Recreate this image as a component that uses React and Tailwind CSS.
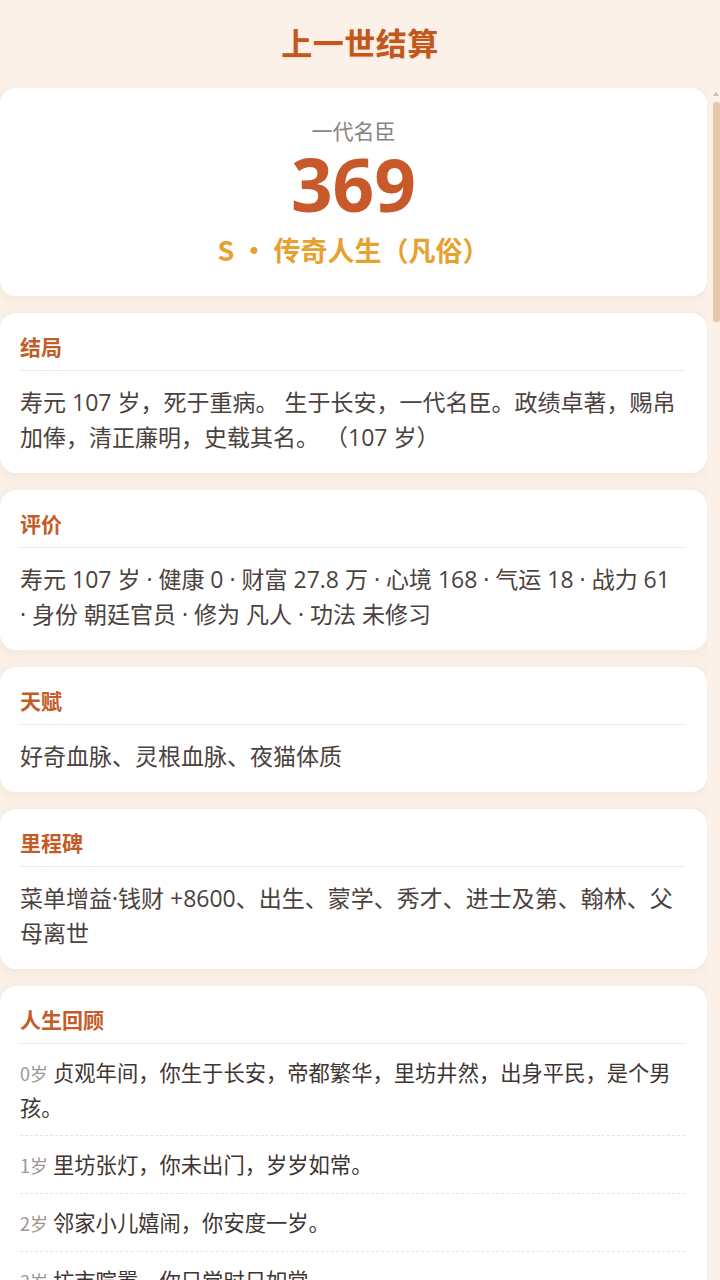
import React from 'react';

const CJK = { fontFamily: '"Noto Sans CJK SC", "Noto Sans", sans-serif' };
const MIXED = { fontFamily: '"Open Sans", "Noto Sans CJK SC", sans-serif' };

const NB = '\u00a0';

const sections = [
  {
    title: '结局',
    text: '寿元 107 岁，死于重病。 生于长安，一代名臣。政绩卓著，赐帛加俸，清正廉明，史载其名。 （107 岁）',
  },
  {
    title: '评价',
    text: `寿元 107 岁 ·${NB}健康 0 ·${NB}财富 27.8 万 ·${NB}心境 168 ·${NB}气运 18 ·${NB}战力 61 ·${NB}身份 朝廷官员 ·${NB}修为 凡人 ·${NB}功法 未修习`,
  },
  { title: '天赋', text: '好奇血脉、灵根血脉、夜猫体质' },
  { title: '里程碑', text: '菜单增益·钱财 +8600、出生、蒙学、秀才、进士及第、翰林、父母离世' },
];

const early = [
  '贞观年间，你生于长安，帝都繁华，里坊井然，出身平民，是个男孩。',
  '里坊张灯，你未出门，岁岁如常。',
  '邻家小儿嬉闹，你安度一岁。',
  '坊市喧嚣，你只觉时日如常。',
];

const filler = [
  '入蒙学，随先生识字，日诵千言。',
  '春日踏青，见曲江花开，心有所感。',
  '寒窗苦读，灯下不辍，学业渐进。',
  '坊间传闻纷纷，你一笑置之。',
  '与同窗论文，颇有心得。',
  '岁末祭祖，家中团圆，平安一岁。',
  '奉命办差，处事谨慎，上官称善。',
  '朝中风波迭起，你守正不阿。',
  '俸禄有余，购置田产。',
  '偶感风寒，调养数月方愈。',
];

const review = Array.from({ length: 108 }, (_, age) => ({
  age,
  text: age < early.length ? early[age] : filler[(age * 7) % filler.length],
}));

const cardCls =
  'bg-white rounded-2xl shadow-[0_2px_12px_rgba(205,160,120,0.16)]';

function Card({ title, children, className = '' }) {
  return (
    <div className={`${cardCls} pl-[20px] pr-[22px] pt-[18px] ${className}`}>
      <h2 className="text-[21px] leading-[30px] font-bold text-[#c45c28] pb-[9px] border-b border-[#f1e7de]">
        {title}
      </h2>
      {children}
    </div>
  );
}

function Scrollbar() {
  return (
    <div className="w-[8px] shrink-0 flex flex-col items-center">
      <svg width="8" height="8" viewBox="0 0 8 8" className="mt-[2px]">
        <path d="M4 1.5 L7 6 L1 6 Z" fill="#dcc0a6" />
      </svg>
      <div className="mt-[4px] w-[7px] h-[220px] rounded-[2px] bg-[#e6c7aa]" />
    </div>
  );
}

export default function App() {
  return (
    <div className="w-[720px] h-[1280px] bg-[#fbf1e8] flex flex-col overflow-hidden" style={CJK}>
      <header className="h-[88px] shrink-0 flex items-center justify-center pb-[4px]">
        <h1 className="text-[31px] font-bold text-[#c2561d] tracking-[0.5px] [text-shadow:0_1px_2px_rgba(194,86,29,0.15)]">
          上一世结算
        </h1>
      </header>

      <div className="flex-1 min-h-0 flex gap-[5px]">
        <div className="w-[707px] overflow-hidden">
          <div className="flex flex-col gap-[17px] pb-[24px]">
            <div className={`${cardCls} pt-[27px] pb-[28px] flex flex-col items-center`}>
              <div className="text-[21px] leading-[30px] text-[#8a837f]">一代名臣</div>
              <div
                className="mt-[3px] text-[73px] leading-[72px] font-bold text-[#c8592a]"
                style={{ fontFamily: '"Open Sans", sans-serif' }}
              >
                369
              </div>
              <div className="mt-[12px] text-[27px] leading-[36px] font-bold text-[#e6a12e]">
                S • 传奇人生（凡俗）
              </div>
            </div>

            {sections.map((s) => (
              <Card key={s.title} title={s.title} className="pb-[18px]">
                <p className="mt-[14px] text-[23px] leading-[35px] text-[#4b423d]" style={MIXED}>
                  {s.text}
                </p>
              </Card>
            ))}

            <Card title="人生回顾" className="pb-[10px]">
              <ul>
                {review.map((r) => (
                  <li
                    key={r.age}
                    className="py-[11px] border-b border-dashed border-[#ece2d8] last:border-b-0 text-[21.3px] leading-[34px] text-[#3f3532]"
                  >
                    <span className="text-[18px] text-[#a0958f] mr-[5px]">{r.age}岁</span>
                    {r.text}
                  </li>
                ))}
              </ul>
            </Card>
          </div>
        </div>
        <Scrollbar />
      </div>
    </div>
  );
}
